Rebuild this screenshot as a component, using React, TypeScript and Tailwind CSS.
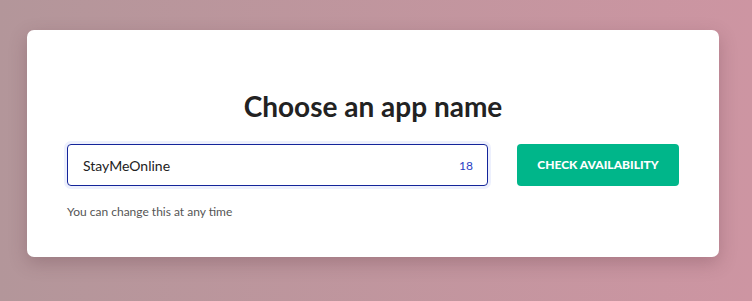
import React from "react";

export default function App() {
  return (
    <div
      className="w-[752px] h-[301px] overflow-hidden bg-gradient-to-r from-[#b3969a] to-[#cd95a2] pt-[30px] pl-[27px]"
      style={{ fontFamily: "Lato, 'Open Sans', sans-serif" }}
    >
      <div className="w-[692px] h-[227px] bg-white rounded-[7px] shadow-[0_6px_18px_rgba(80,40,50,0.25)] px-10 pt-[59px]">
        <h1 className="text-center text-[28px] leading-[34px] font-bold text-[#222222]">
          Choose an app name
        </h1>
        <div className="mt-[21px] flex items-center justify-between">
          <div className="w-[421px] h-[42px] rounded-[4px] border border-[#14259a] ring-[3px] ring-[#edf0fd] flex items-center justify-between pl-[15px] pr-[14px]">
            <span className="text-[14px] leading-[20px] pt-[1px] text-[#222222]">StayMeOnline</span>
            <span className="text-[12px] leading-[16px] pt-[1px] text-[#2a3ec4]">18</span>
          </div>
          <button className="w-[162px] h-[42px] rounded-[4px] bg-[#00b68a] text-white text-[12px] font-black tracking-[0px]">
            CHECK AVAILABILITY
          </button>
        </div>
        <p className="mt-[18px] text-[12px] leading-[16px] text-[#555555]">
          You can change this at any time
        </p>
      </div>
    </div>
  );
}
